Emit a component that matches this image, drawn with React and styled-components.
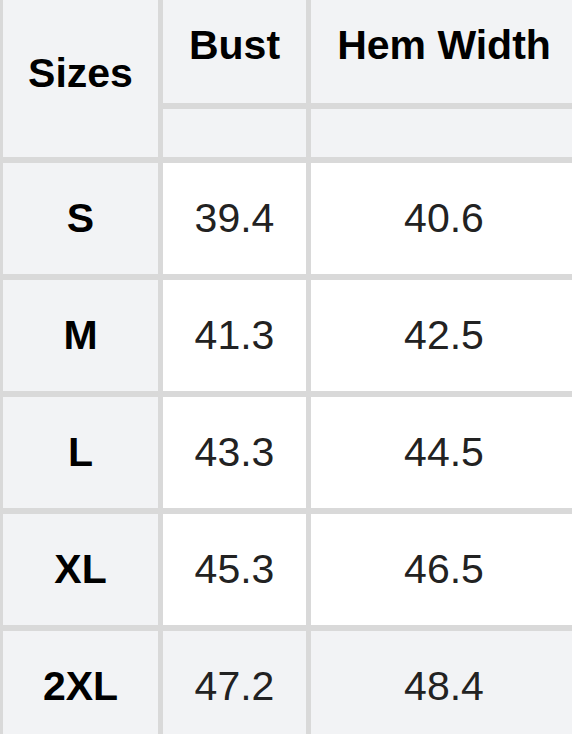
import React from "react";
import styled, { createGlobalStyle } from "styled-components";

const GlobalStyle = createGlobalStyle`
  html, body {
    margin: 0;
    padding: 0;
    background: #ffffff;
    overflow: hidden;
  }
  body {
    font-family: "Liberation Sans", Arial, Helvetica, sans-serif;
  }
`;

const rows = [
  { size: "S", bust: "39.4", hem: "40.6" },
  { size: "M", bust: "41.3", hem: "42.5" },
  { size: "L", bust: "43.3", hem: "44.5" },
  { size: "XL", bust: "45.3", hem: "46.5" },
  { size: "2XL", bust: "47.2", hem: "48.4", shaded: true },
];

const Table = styled.div`
  display: grid;
  grid-template-columns: 155px 143px 266px;
  grid-template-rows: 103px 48px repeat(5, 111px);
  gap: 6px 5px;
  padding-left: 3px;
  width: max-content;
  background: #d9d9d9;
`;

const Cell = styled.div`
  display: flex;
  align-items: center;
  justify-content: center;
  background: ${(p) => (p.$grey ? "#f2f3f5" : "#ffffff")};
  color: ${(p) => (p.$bold ? "#000000" : "#222222")};
  font-size: 41px;
  font-weight: ${(p) => (p.$bold ? 700 : 400)};
  padding-bottom: ${(p) => (p.$lift ? `${p.$lift}px` : "0")};
  box-sizing: border-box;
  white-space: nowrap;
`;

const SizesHead = styled(Cell)`
  grid-row: 1 / 3;
`;

export default function App() {
  return (
    <>
      <GlobalStyle />
      <Table>
        <SizesHead $grey $bold $lift={10}>
          Sizes
        </SizesHead>
        <Cell $grey $bold $lift={12}>
          Bust
        </Cell>
        <Cell $grey $bold $lift={12}>
          Hem Width
        </Cell>
        <Cell $grey />
        <Cell $grey />
        {rows.map((r) => (
          <React.Fragment key={r.size}>
            <Cell $grey $bold>
              {r.size}
            </Cell>
            <Cell $grey={r.shaded}>{r.bust}</Cell>
            <Cell $grey={r.shaded}>{r.hem}</Cell>
          </React.Fragment>
        ))}
      </Table>
    </>
  );
}
